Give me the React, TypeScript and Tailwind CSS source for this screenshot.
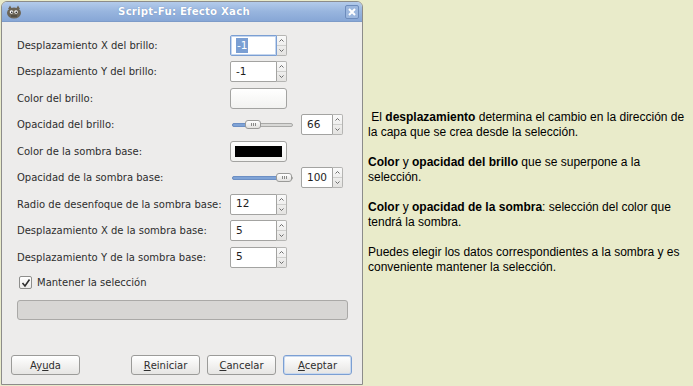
import { ReactNode } from 'react';

const font = { fontFamily: '"DejaVu Sans", Verdana, sans-serif' };

const SpinArrows = () => (
  <div className="flex flex-col w-[10px] h-full border border-l-0 border-[#b5b5b3] rounded-r-[2px] bg-gradient-to-b from-[#fafafa] to-[#e4e3e1]">
    <div className="flex-1 flex items-center justify-center border-b border-[#cfcfcd]">
      <svg width="5" height="3" viewBox="0 0 5 3"><path d="M0.5 2.5 L2.5 0.5 L4.5 2.5" fill="none" stroke="#6b6b6b" strokeWidth="1" /></svg>
    </div>
    <div className="flex-1 flex items-center justify-center">
      <svg width="5" height="3" viewBox="0 0 5 3"><path d="M0.5 0.5 L2.5 2.5 L4.5 0.5" fill="none" stroke="#6b6b6b" strokeWidth="1" /></svg>
    </div>
  </div>
);

const Spin = ({ value, focused = false, width = 'w-[47px]' }: { value: string; focused?: boolean; width?: string }) => (
  <div className="flex h-[21px]">
    <div
      className={`${width} h-full bg-white border rounded-l-[2px] flex items-center pl-[5px] text-[10.5px] text-[#1e1e1e] ${
        focused ? 'border-[#7b9fd3] shadow-[inset_0_0_0_1px_#c5d6ee]' : 'border-[#a3a3a1]'
      }`}
    >
      {focused ? <span className="bg-[#7b9fd3] text-white px-[1px] leading-[15px]">{value}</span> : value}
    </div>
    <SpinArrows />
  </div>
);

const ColorBtn = ({ color }: { color?: string }) => (
  <div className="w-[57px] h-[21px] rounded-[3px] border border-[#a3a3a1] bg-gradient-to-b from-white to-[#f2f2f0] p-[4px]">
    {color && <div className="w-full h-full" style={{ background: color }} />}
  </div>
);

const Slider = ({ pos }: { pos: number }) => (
  <div className="relative w-[61px] h-[9px] ml-[2px] mr-[8px] flex items-center">
    <div className="w-full h-[4px] rounded-[2px] border border-[#a9a9a7] bg-[#d8d8d6]" />
    <div className="absolute left-0 h-[4px] rounded-l-[2px] bg-[#7fa3d6] border border-[#6c8fc4]" style={{ width: pos + 4 }} />
    <div
      className="absolute top-0 w-[16px] h-[9px] rounded-[3px] border border-[#9a9a98] bg-gradient-to-b from-white to-[#e2e1df] flex items-center justify-center gap-[1px]"
      style={{ left: pos }}
    >
      <span className="w-px h-[3px] bg-[#8a8a88]" />
      <span className="w-px h-[3px] bg-[#8a8a88]" />
      <span className="w-px h-[3px] bg-[#8a8a88]" />
    </div>
  </div>
);

const Row = ({ label, children }: { label: string; children: ReactNode }) => (
  <div className="flex items-center h-[26.5px]">
    <div className="w-[213px] text-[10px] text-[#2e2e2e] whitespace-nowrap">{label}</div>
    {children}
  </div>
);

const Btn = ({ children, def = false }: { children: ReactNode; def?: boolean }) => (
  <div
    className={`w-[69px] h-[20px] rounded-[3px] border flex items-center justify-center text-[10px] text-[#2e2e2e] bg-gradient-to-b from-white to-[#e6e5e3] ${
      def ? 'border-[#7b9fd3] shadow-[inset_0_0_0_1px_#c9d9ef]' : 'border-[#9b9b99]'
    }`}
  >
    {children}
  </div>
);

export default function App() {
  return (
    <div className="w-[693px] h-[386px] bg-[#e9ebca] flex overflow-hidden">
      {/* dialog */}
      <div className="w-[362px] h-[384px] mt-[1px] ml-[1px] border border-[#8c8c8a] rounded-t-[6px] bg-[#edeceb] flex flex-col overflow-hidden" style={font}>
        <div className="h-[20px] bg-gradient-to-b from-[#b3cbeb] via-[#98b5de] to-[#87a7d6] border-b border-[#7d9bc8] flex items-center px-[2px]">
          <svg width="18" height="14" viewBox="0 0 18 14" className="ml-[1px]">
            <ellipse cx="9" cy="8" rx="7" ry="5.5" fill="#6b6456" />
            <path d="M3 4 L5 0.5 L7 4 Z M11 4 L13 0.5 L15 4 Z" fill="#6b6456" />
            <circle cx="6.5" cy="7" r="1.8" fill="#fff" />
            <circle cx="11" cy="7" r="1.8" fill="#fff" />
            <circle cx="6.8" cy="7.2" r="0.8" fill="#000" />
            <circle cx="11.2" cy="7.2" r="0.8" fill="#000" />
            <path d="M6 11 L12 11" stroke="#3e3a32" strokeWidth="1" />
          </svg>
          <div className="flex-1 text-center text-white font-bold text-[10.2px] tracking-[0.2px] [text-shadow:0_0_1px_#5f7fb0]">Script-Fu: Efecto Xach</div>
          <div className="w-[14px] h-[14px] rounded-[2px] border border-[#6d8cbc] bg-[#9cb7de] flex items-center justify-center mr-[1px]">
            <svg width="8" height="8" viewBox="0 0 8 8"><path d="M1 1 L7 7 M7 1 L1 7" stroke="#fff" strokeWidth="2" /></svg>
          </div>
        </div>

        <div className="flex flex-col pl-[15px] pt-[10px]">
          <Row label="Desplazamiento X del brillo:"><Spin value="-1" focused /></Row>
          <Row label="Desplazamiento Y del brillo:"><Spin value="-1" /></Row>
          <Row label="Color del brillo:"><ColorBtn /></Row>
          <Row label="Opacidad del brillo:"><Slider pos={13} /><Spin value="66" width="w-[32px]" /></Row>
          <Row label="Color de la sombra base:"><ColorBtn color="#000" /></Row>
          <Row label="Opacidad de la sombra base:"><Slider pos={44} /><Spin value="100" width="w-[32px]" /></Row>
          <Row label="Radio de desenfoque de la sombra base:"><Spin value="12" /></Row>
          <Row label="Desplazamiento X de la sombra base:"><Spin value="5" /></Row>
          <Row label="Desplazamiento Y de la sombra base:"><Spin value="5" /></Row>
          <div className="flex items-center h-[24px] pl-[2px] gap-[5px] text-[10px] text-[#2e2e2e]">
            <div className="w-[13px] h-[13px] border border-[#8e8e8c] rounded-[2px] bg-gradient-to-b from-white to-[#ecebe9] flex items-center justify-center">
              <svg width="10" height="10" viewBox="0 0 10 10"><path d="M1.5 5 L4 8 L8.5 1.5" fill="none" stroke="#2e2e2e" strokeWidth="1.6" /></svg>
            </div>
            Mantener la selección
          </div>
          <div className="w-[331px] h-[20px] mt-[5px] rounded-[3px] border border-[#aaa9a7] bg-[#d7d6d4]" />
        </div>

        <div className="flex items-center mt-auto mb-[9px] px-[9px]">
          <Btn>Ay<u>u</u>da</Btn>
          <div className="flex-1" />
          <div className="flex gap-[7px] mr-[1px]">
            <Btn><u>R</u>einiciar</Btn>
            <Btn><u>C</u>ancelar</Btn>
            <Btn def><u>A</u>ceptar</Btn>
          </div>
        </div>
      </div>

      {/* notes */}
      <div className="ml-[5px] pt-[110px] w-[325px] text-[12px] leading-[15px] text-black flex flex-col gap-[15px]" style={{ fontFamily: '"Liberation Sans", Arial, sans-serif' }}>
        <p>&nbsp;El <b>desplazamiento</b> determina el cambio en la dirección de la capa que se crea desde la selección.</p>
        <p><b>Color</b> y <b>opacidad del brillo</b> que se superpone a la selección.</p>
        <p><b>Color</b> y <b>opacidad de la sombra</b>: selección del color que tendrá la sombra.</p>
        <p>Puedes elegir los datos correspondientes a la sombra y es conveniente mantener la selección.</p>
      </div>
    </div>
  );
}
